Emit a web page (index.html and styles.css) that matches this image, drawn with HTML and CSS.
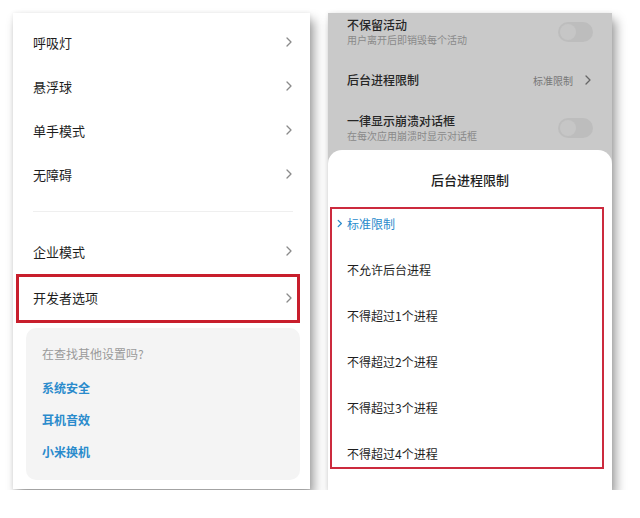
FILE: index.html
```html
<!DOCTYPE html>
<html lang="zh">
<head>
<meta charset="utf-8">
<link rel="stylesheet" href="styles.css">
</head>
<body>
<div class="page">
  <div class="panel left">
    <div class="rows">
      <div class="row"><span>呼吸灯</span><svg class="chev" viewBox="0 0 6 10"><polyline points="1,1 5,5 1,9"/></svg></div>
      <div class="row"><span>悬浮球</span><svg class="chev" viewBox="0 0 6 10"><polyline points="1,1 5,5 1,9"/></svg></div>
      <div class="row"><span>单手模式</span><svg class="chev" viewBox="0 0 6 10"><polyline points="1,1 5,5 1,9"/></svg></div>
      <div class="row"><span>无障碍</span><svg class="chev" viewBox="0 0 6 10"><polyline points="1,1 5,5 1,9"/></svg></div>
    </div>
    <div class="sep"></div>
    <div class="row"><span>企业模式</span><svg class="chev" viewBox="0 0 6 10"><polyline points="1,1 5,5 1,9"/></svg></div>
    <div class="row hl"><span>开发者选项</span><svg class="chev" viewBox="0 0 6 10"><polyline points="1,1 5,5 1,9"/></svg></div>
    <div class="card">
      <div class="card-q">在查找其他设置吗?</div>
      <div class="links">
        <div class="link">系统安全</div>
        <div class="link">耳机音效</div>
        <div class="link">小米换机</div>
      </div>
    </div>
  </div>

  <div class="panel right">
    <div class="dim">
      <div class="drow">
        <div class="dtext"><div class="dt">不保留活动</div><div class="ds">用户离开后即销毁每个活动</div></div>
        <div class="toggle"><div class="knob"></div></div>
      </div>
      <div class="drow">
        <div class="dtext"><div class="dt">后台进程限制</div></div>
        <div class="dval">标准限制<svg class="chev dk" viewBox="0 0 6 10"><polyline points="1,1 5,5 1,9"/></svg></div>
      </div>
      <div class="drow">
        <div class="dtext"><div class="dt">一律显示崩溃对话框</div><div class="ds">在每次应用崩溃时显示对话框</div></div>
        <div class="toggle"><div class="knob"></div></div>
      </div>
    </div>
    <div class="sheet">
      <div class="sheet-title">后台进程限制</div>
      <div class="opts">
        <div class="opt sel"><svg class="schev" viewBox="0 0 6 10"><polyline points="1,1.5 4.5,5 1,8.5"/></svg>标准限制</div>
        <div class="opt">不允许后台进程</div>
        <div class="opt">不得超过1个进程</div>
        <div class="opt">不得超过2个进程</div>
        <div class="opt">不得超过3个进程</div>
        <div class="opt">不得超过4个进程</div>
      </div>
    </div>
  </div>
</div>
</body>
</html>
```

FILE: styles.css
```css
* { box-sizing: border-box; }
body {
  margin: 0;
  background: #ffffff;
  font-family: "Noto Sans CJK SC", "Noto Sans", sans-serif;
  color: #222;
}
.page {
  display: flex;
  gap: 18px;
  padding: 13px 0 0 13px;
  align-items: flex-start;
}
.panel {
  background: #fff;
  box-shadow: 4px 7px 10px rgba(0,0,0,0.38), 0 0 4px rgba(0,0,0,0.07);
}
.left {
  width: 297px;
  height: 476px;
  display: flex;
  flex-direction: column;
  padding-bottom: 9px;
}
.rows { padding-top: 7px; }
.row {
  height: 44px;
  display: flex;
  align-items: center;
  justify-content: space-between;
  padding: 0 18px 0 20px;
  font-size: 13px;
  color: #1e1e1e;
}
.chev {
  width: 6px;
  height: 10px;
  fill: none;
  stroke: #8a8a8a;
  stroke-width: 1.3;
  stroke-linecap: round;
  stroke-linejoin: round;
}
.sep {
  height: 1px;
  background: #efefef;
  margin: 15px 17px 17px 20px;
}
.hl {
  height: 49px;
  border: 3px solid #c81e2c;
  margin: 1px 10px 0 3px;
  padding: 0 5px 2px 14px;
}
.card {
  margin: 5px 10px 0 13px;
  background: #f4f4f4;
  border-radius: 10px;
  padding: 16px 16px 18px;
  flex: 1;
}
.card-q {
  font-size: 12px;
  line-height: 20px;
  color: #9a9a9a;
  margin-bottom: 14px;
}
.links { display: flex; flex-direction: column; gap: 12px; }
.link {
  font-size: 12px;
  line-height: 20px;
  font-weight: 700;
  color: #2a8bcc;
}
.right {
  width: 284px;
  height: 477px;
  background: #c9c9c9;
  display: flex;
  flex-direction: column;
}
.dim {
  height: 137px;
  display: flex;
  flex-direction: column;
  gap: 10px;
}
.drow {
  height: 38px;
  display: flex;
  align-items: center;
  justify-content: space-between;
  padding: 0 19px;
}
.dt {
  font-size: 12px;
  line-height: 16px;
  font-weight: 500;
  color: #262626;
}
.ds {
  font-size: 10px;
  line-height: 14px;
  color: #8a8a8a;
}
.toggle {
  width: 35px;
  height: 20px;
  border-radius: 10px;
  background: #bdbdbd;
  padding: 2px;
}
.knob {
  width: 16px;
  height: 16px;
  border-radius: 50%;
  background: #c6c6c6;
}
.dval {
  display: flex;
  align-items: center;
  gap: 12px;
  font-size: 10px;
  color: #777;
  padding-right: 2px;
}
.chev.dk { stroke: #666; }
.sheet {
  flex: 1;
  background: #fff;
  border-radius: 14px 14px 0 0;
  display: flex;
  flex-direction: column;
  padding-bottom: 21px;
}
.sheet-title {
  text-align: center;
  font-size: 13px;
  font-weight: 500;
  line-height: 18px;
  padding: 21px 0 18px;
  color: #1e1e1e;
}
.opts {
  margin: 0 8px 0 2px;
  border: 2px solid #cc2a3e;
  display: flex;
  flex-direction: column;
  gap: 18px;
  padding: 0 0 0 15px;
}
.opt {
  height: 28px;
  display: flex;
  align-items: center;
  font-size: 12px;
  color: #1e1e1e;
  position: relative;
}
.opt.sel { color: #2a8bcc; }
.schev {
  position: absolute;
  left: -10px;
  top: 10px;
  width: 6px;
  height: 9px;
  fill: none;
  stroke: #2a8bcc;
  stroke-width: 1.4;
  stroke-linecap: round;
  stroke-linejoin: round;
}
```
